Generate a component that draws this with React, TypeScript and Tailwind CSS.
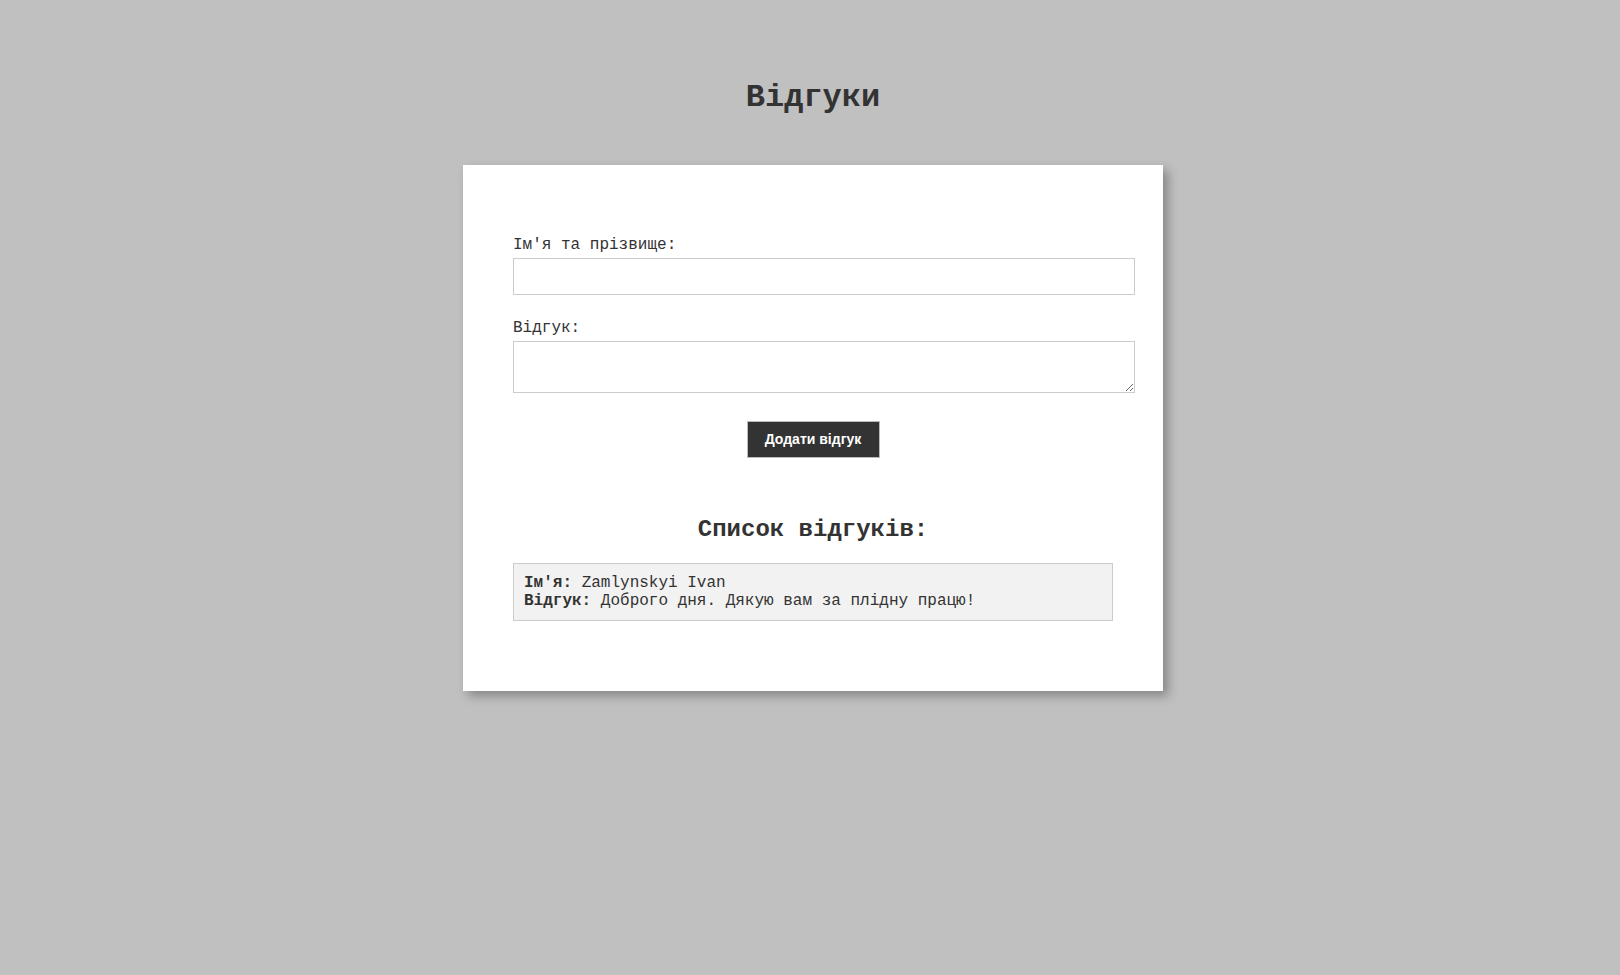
import { useState } from "react";

type Review = { name: string; text: string };

const mono = "font-['Courier_New','Liberation_Mono',monospace]";

export default function App() {
  const [name, setName] = useState("");
  const [text, setText] = useState("");
  const [reviews, setReviews] = useState<Review[]>([
    { name: "Zamlynskyi Ivan", text: "Доброго дня. Дякую вам за плідну працю!" },
  ]);

  const add = (e: React.FormEvent) => {
    e.preventDefault();
    if (!name.trim() || !text.trim()) return;
    setReviews([...reviews, { name, text }]);
    setName("");
    setText("");
  };

  return (
    <div className={`min-h-screen bg-[#c0c0c0] pt-[80px] pl-[6px] text-[#333] ${mono}`}>
      <h1 className="text-center text-[32px] leading-[36px] font-bold">Відгуки</h1>

      <div className="mx-auto mt-[49px] w-[700px] bg-white p-[50px] shadow-[5px_5px_10px_rgba(0,0,0,0.3)]">
        <form onSubmit={add} className="mt-[21px]">
          <label className="mb-[4px] block text-[16px] leading-[18px]">Ім'я та прізвище:</label>
          <input
            value={name}
            onChange={(e) => setName(e.target.value)}
            className="block h-[37px] w-[622px] border border-[#ccc] px-[10px] text-[13px] outline-none"
          />

          <label className="mt-[24px] mb-[4px] block text-[16px] leading-[18px]">Відгук:</label>
          <textarea
            value={text}
            onChange={(e) => setText(e.target.value)}
            className="block h-[52px] w-[622px] border border-[#ccc] p-[10px] text-[13px] outline-none"
          />

          <div className="mt-[28px] flex justify-center">
            <button
              type="submit"
              className="h-[37px] w-[133px] border border-[#bbb] bg-[#333] text-[14px] font-bold text-white font-['Arial','Liberation_Sans',sans-serif]"
            >
              Додати відгук
            </button>
          </div>
        </form>

        <h2 className="mt-[58px] text-center text-[24px] leading-[27px] font-bold">Список відгуків:</h2>

        <div className="mt-[20px] mb-[20px] flex flex-col gap-[10px]">
          {reviews.map((r, i) => (
            <div key={i} className="w-[600px] border border-[#ccc] bg-[#f2f2f2] p-[10px] text-[16px] leading-[18px]">
              <div>
                <b>Ім'я:</b> {r.name}
              </div>
              <div>
                <b>Відгук:</b> {r.text}
              </div>
            </div>
          ))}
        </div>
      </div>
    </div>
  );
}
